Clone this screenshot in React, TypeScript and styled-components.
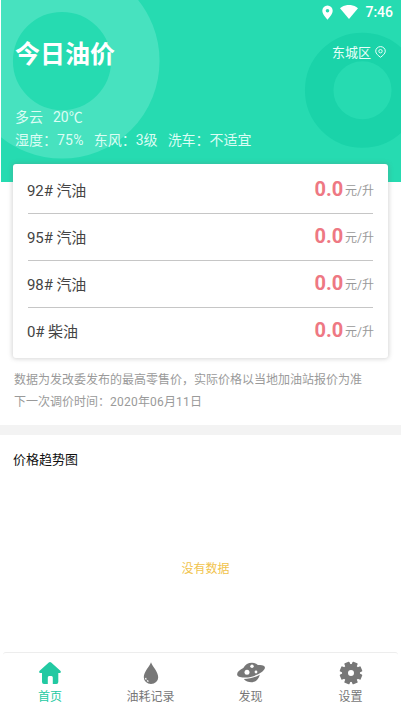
import React from "react";
import styled, { createGlobalStyle } from "styled-components";

const GlobalStyle = createGlobalStyle`
  *, *::before, *::after { box-sizing: border-box; }
  body {
    margin: 0;
    background: #fff;
    font-family: Roboto, "Noto Sans CJK SC", sans-serif;
  }
`;

const Screen = styled.div`
  width: 401px;
  height: 710px;
  display: flex;
  flex-direction: column;
  overflow: hidden;
  background: #fff;
`;

const Header = styled.header`
  position: relative;
  flex: none;
  height: 182px;
  margin-left: 1px;
  background: #26dbb1;
  color: #fff;
  overflow: hidden;
`;

const Rings = styled.svg`
  position: absolute;
  inset: 0;
`;

const HeaderContent = styled.div`
  position: relative;
  display: flex;
  flex-direction: column;
`;

const StatusBar = styled.div`
  height: 24px;
  display: flex;
  align-items: center;
  justify-content: flex-end;
  gap: 7px;
  padding-right: 8px;
  font-size: 14px;
  font-weight: 500;
  line-height: 24px;
`;

const TitleRow = styled.div`
  height: 56px;
  display: flex;
  align-items: center;
  justify-content: space-between;
  padding: 0 15px 0 14px;
`;

const Title = styled.h1`
  margin: 0;
  padding-top: 5px;
  font-size: 25px;
  line-height: 56px;
  font-weight: 700;
`;

const District = styled.div`
  display: flex;
  align-items: center;
  gap: 4px;
  padding-top: 2px;
  font-size: 13px;
  line-height: 20px;
  color: #e9fff9;
  svg { margin-top: -3px; }
`;

const Weather = styled.div`
  margin-top: 26px;
  padding-left: 14px;
`;

const WeatherLine = styled.div`
  display: flex;
  gap: 10px;
  height: 23px;
  font-size: 14px;
  line-height: 23px;
  color: #dcfdf4;
`;

const Digits = styled.span`
  letter-spacing: 0.25px;
`;

const PriceCard = styled.section`
  position: relative;
  flex: none;
  height: 194px;
  margin: -18px 13px 0;
  padding: 3px 15px 0 14px;
  border-radius: 3px;
  background: #fff;
  box-shadow: 0 0 4px 1px rgba(110, 110, 110, 0.28);
`;

const PriceRow = styled.div`
  display: flex;
  align-items: center;
  justify-content: space-between;
  height: 47px;
  margin-left: 1px;
  border-bottom: 1px solid #c6c6c6;
  &:last-child { border-bottom-color: transparent; }
`;

const FuelName = styled.span`
  margin-left: -1px;
  padding-top: 2px;
  font-size: 15px;
  line-height: 22px;
  letter-spacing: -0.1px;
  color: #444;
`;

const Price = styled.span`
  display: flex;
  align-items: center;
  margin-right: -1px;
  line-height: 24px;
`;

const Amount = styled.b`
  padding-bottom: 2px;
  font-size: 20px;
  letter-spacing: -0.1px;
  color: #ee7883;
`;

const Unit = styled.span`
  margin-left: 2px;
  padding-top: 1px;
  font-size: 12px;
  color: #999;
`;

const Notice = styled.div`
  flex: none;
  height: 67px;
  padding: 11px 14px 0;
  font-size: 12px;
  line-height: 22px;
  color: #9a9a9a;
  white-space: nowrap;
`;

const SectionBand = styled.div`
  flex: none;
  height: 10px;
  background: #f3f3f3;
`;

const Trend = styled.section`
  flex: 1;
  display: flex;
  flex-direction: column;
`;

const TrendTitle = styled.h2`
  margin: 15px 0 0 13px;
  font-size: 13px;
  line-height: 20px;
  font-weight: 400;
  color: #111;
`;

const EmptyChart = styled.div`
  margin-top: 89px;
  padding-left: 10px;
  text-align: center;
  font-size: 12px;
  line-height: 20px;
  color: #f1c34c;
`;

const TabBar = styled.nav`
  flex: none;
  height: 58px;
  margin: 0 3px;
  display: grid;
  grid-template-columns: 94px 107px 93px 107px;
  border-top: 1px solid #ededed;
  border-radius: 3px 3px 0 0;
`;

const Tab = styled.div<{ $active?: boolean }>`
  display: flex;
  flex-direction: column;
  align-items: center;
  padding-top: 6px;
  font-size: 12px;
  line-height: 18px;
  color: ${(p) => (p.$active ? "#22c9a2" : "#777")};
  svg { display: block; margin-bottom: 1px; }
`;

const HomeIcon = () => (
  <svg width="28" height="28" viewBox="0 0 28 28" fill="currentColor">
    <path d="M12.8 3.5Q14 2.4 15.2 3.5L24.6 12.1Q25.6 13.7 24 13.9H22.3V23Q22.3 25 20.4 25H16.8V18.6Q16.8 17 15.5 17H13Q11.8 17 11.8 18.6V25H8Q6 25 6 23V13.9H4Q2.4 13.7 3.4 12.1Z" />
  </svg>
);

const DropIcon = () => (
  <svg width="28" height="28" viewBox="0 0 28 28">
    <path d="M14 3.2C12.5 7.5 6.8 12.8 6.8 18.2A7.2 6.9 0 0 0 21.2 18.2C21.2 12.8 15.5 7.5 14 3.2Z" fill="currentColor" />
    <path d="M8.6 18.8C9 21 10.3 22 12.4 22.7" fill="none" stroke="#fff" strokeWidth="1.2" strokeDasharray="1.8 1.2" />
  </svg>
);

const PlanetIcon = () => (
  <svg width="30" height="28" viewBox="0 0 30 28">
    <path d="M7.3 9.1C9.2 5.5 12.2 3.8 16 3.8C18.4 3.8 20.4 4.6 21.9 6.1C26.4 5.6 29.3 6.7 28.9 9C28.3 13 18 18.3 9.3 18.6C4.2 18.8 1 17.6 1.1 15.2C1.2 13.3 3.5 11 7.3 9.1Z" fill="currentColor" />
    <path d="M7.8 20.1C13.4 20.1 19 18.4 23.8 15.7C22.7 20.4 19.4 23.3 15.4 23.3C12.3 23.3 9.7 22.3 7.8 20.1Z" fill="currentColor" />
    <circle cx="11" cy="13.2" r="2.5" fill="#fff" />
    <circle cx="16" cy="7.3" r="1.7" fill="#fff" />
    <circle cx="20" cy="13" r="1.4" fill="#fff" />
  </svg>
);

const GearIcon = () => (
  <svg width="28" height="28" viewBox="0 0 28 28" fill="currentColor" fillRule="evenodd">
    <g transform="translate(14 14)">
      <path d="M8.3 -3.4A9 9 0 0 1 8.3 3.4A9 9 0 0 1 3.4 8.3A9 9 0 0 1 -3.4 8.3A9 9 0 0 1 -8.3 3.4A9 9 0 0 1 -8.3 -3.4A9 9 0 0 1 -3.4 -8.3A9 9 0 0 1 3.4 -8.3A9 9 0 0 1 8.3 -3.4ZM3 0A3 3 0 1 0 -3 0A3 3 0 1 0 3 0Z" />
      {[22.5, 67.5, 112.5, 157.5, 202.5, 247.5, 292.5, 337.5].map((a) => (
        <rect key={a} x="-2.8" y="-11.3" width="5.6" height="4.5" rx="0.8" transform={`rotate(${a})`} />
      ))}
    </g>
  </svg>
);

const LocationIcon = () => (
  <svg width="11" height="15" viewBox="0 0 11 15">
    <path d="M5.5 0.5A5.2 5.2 0 0 0 .3 5.7C.3 9.2 5.5 14.7 5.5 14.7S10.7 9.2 10.7 5.7A5.2 5.2 0 0 0 5.5.5ZM5.5 3.9A1.8 1.8 0 1 1 5.5 7.5A1.8 1.8 0 0 1 5.5 3.9Z" fill="#fff" fillRule="evenodd" />
  </svg>
);

const WifiIcon = () => (
  <svg width="18" height="15" viewBox="0 0 18 15">
    <path d="M0 3.2C5.2-1.2 12.8-1.2 18 3.2L9 13.9Z" fill="#fff" />
  </svg>
);

const DistrictPin = () => (
  <svg width="11" height="12" viewBox="0 0 11 12" fill="none" stroke="#e9fff9">
    <path d="M5.5 11.3C3.6 9.8.7 7.8.7 5.2A4.8 4.6 0 0 1 10.3 5.2C10.3 7.8 7.4 9.8 5.5 11.3Z" />
    <circle cx="5.5" cy="5.2" r="1.7" />
  </svg>
);

const fuels = ["92# 汽油", "95# 汽油", "98# 汽油", "0# 柴油"];

const tabs = [
  { label: "首页", Icon: HomeIcon, active: true },
  { label: "油耗记录", Icon: DropIcon },
  { label: "发现", Icon: PlanetIcon },
  { label: "设置", Icon: GearIcon },
];

export default function App() {
  return (
    <Screen>
      <GlobalStyle />
      <Header>
        <Rings width="400" height="182" viewBox="1 0 400 182" fill="none">
          <circle cx="62" cy="61" r="73.3" stroke="#47e2bf" strokeWidth="48.5" />
          <circle cx="362.5" cy="90.3" r="43.3" stroke="#1ad3a9" strokeWidth="28.5" />
        </Rings>
        <HeaderContent>
          <StatusBar>
            <LocationIcon />
            <WifiIcon />
            <span>7:46</span>
          </StatusBar>
          <TitleRow>
            <Title>今日油价</Title>
            <District>
              东城区
              <DistrictPin />
            </District>
          </TitleRow>
          <Weather>
            <WeatherLine><span>多云</span><span>20℃</span></WeatherLine>
            <WeatherLine>
              <span>湿度：<Digits>75%</Digits></span>
              <span>东风：3级</span>
              <span>洗车：不适宜</span>
            </WeatherLine>
          </Weather>
        </HeaderContent>
      </Header>
      <PriceCard>
        {fuels.map((name) => (
          <PriceRow key={name}>
            <FuelName>{name}</FuelName>
            <Price><Amount>0.0</Amount><Unit>元/升</Unit></Price>
          </PriceRow>
        ))}
      </PriceCard>
      <Notice>
        <div>数据为发改委发布的最高零售价，实际价格以当地加油站报价为准</div>
        <div>
          下一次调价时间：<Digits>2020</Digits>年<Digits>06</Digits>月<Digits>11</Digits>日
        </div>
      </Notice>
      <SectionBand />
      <Trend>
        <TrendTitle>价格趋势图</TrendTitle>
        <EmptyChart>没有数据</EmptyChart>
      </Trend>
      <TabBar>
        {tabs.map(({ label, Icon, active }) => (
          <Tab key={label} $active={active}><Icon />{label}</Tab>
        ))}
      </TabBar>
    </Screen>
  );
}
